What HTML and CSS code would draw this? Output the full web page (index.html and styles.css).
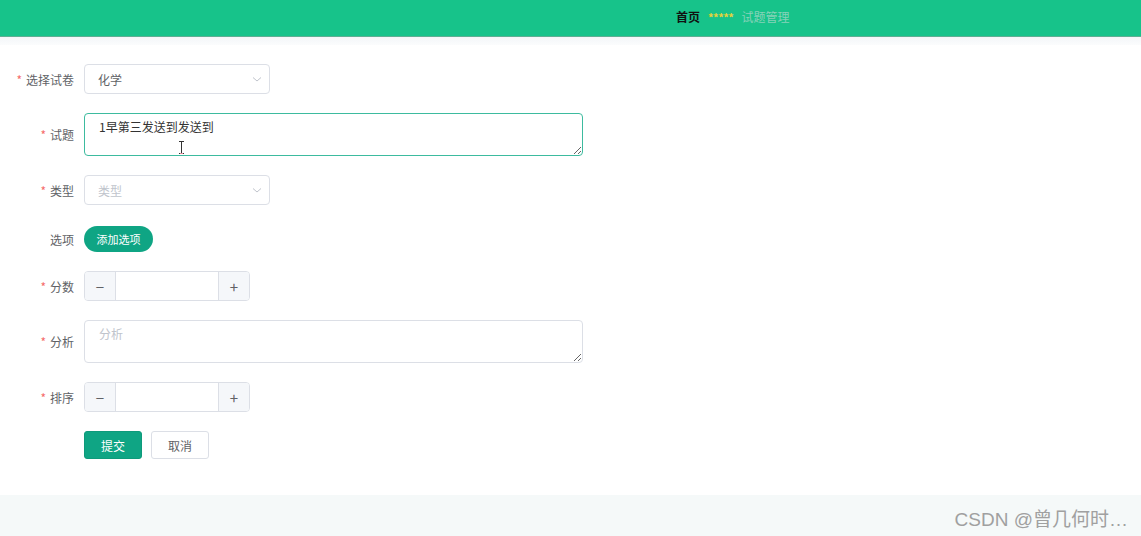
FILE: index.html
```html
<!DOCTYPE html>
<html lang="zh">
<head>
<meta charset="utf-8">
<title>试题管理</title>
<link rel="stylesheet" href="styles.css">
</head>
<body>
<header class="topbar">
  <nav class="crumbs">
    <span class="crumb-home">首页</span>
    <span class="crumb-sep">*****</span>
    <span class="crumb-cur">试题管理</span>
  </nav>
</header>
<div class="topshade"></div>
<main class="page">
  <form class="form">
    <div class="item">
      <label class="label req">选择试卷</label>
      <div class="select">
        <span class="select-text">化学</span>
        <svg class="chev" width="12" height="12" viewBox="0 0 12 12"><path d="M2 4.5 L6 8 L10 4.5" fill="none" stroke="#c0c4cc" stroke-width="1"/></svg>
      </div>
    </div>
    <div class="item">
      <label class="label req">试题</label>
      <div class="ta-wrap">
        <textarea class="ta focus">1早第三发送到发送到</textarea>
        <svg class="ibeam" width="7" height="13" viewBox="0 0 7 13"><path d="M1 0.5 H6 M3.5 0.5 V12.5 M1 12.5 H6" fill="none" stroke="#333" stroke-width="1"/><path d="M2 12.5 H5" stroke="#e08c9c" stroke-width="1"/></svg>
      </div>
    </div>
    <div class="item">
      <label class="label req">类型</label>
      <div class="select">
        <span class="select-text placeholder">类型</span>
        <svg class="chev" width="12" height="12" viewBox="0 0 12 12"><path d="M2 4.5 L6 8 L10 4.5" fill="none" stroke="#c0c4cc" stroke-width="1"/></svg>
      </div>
    </div>
    <div class="item item-opt">
      <label class="label">选项</label>
      <button type="button" class="btn-round">添加选项</button>
    </div>
    <div class="item">
      <label class="label req">分数</label>
      <div class="num">
        <span class="num-btn minus">−</span>
        <input class="num-input" type="text">
        <span class="num-btn plus">+</span>
      </div>
    </div>
    <div class="item">
      <label class="label req">分析</label>
      <textarea class="ta" placeholder="分析"></textarea>
    </div>
    <div class="item">
      <label class="label req">排序</label>
      <div class="num">
        <span class="num-btn minus">−</span>
        <input class="num-input" type="text">
        <span class="num-btn plus">+</span>
      </div>
    </div>
    <div class="item actions">
      <span class="label"></span>
      <button type="button" class="btn primary">提交</button>
      <button type="button" class="btn plain">取消</button>
    </div>
  </form>
</main>
<footer class="foot">
  <span class="mark">CSDN @曾几何时…</span>
</footer>
</body>
</html>
```
FILE: styles.css
```css
* { box-sizing: border-box; }
html, body { margin: 0; padding: 0; }
body {
  width: 1141px;
  height: 536px;
  overflow: hidden;
  font-family: "Noto Sans CJK SC", "Noto Sans", sans-serif;
  font-size: 12px;
  color: #606266;
  background: #ffffff;
}
.topbar {
  height: 37px;
  background: #17c38a;
  border-bottom: 1px solid #5fae93;
  display: flex;
  align-items: center;
  padding-left: 676px;
  padding-bottom: 2px;
}
.crumbs { display: flex; align-items: center; gap: 8px; font-size: 12px; line-height: 16px; }
.crumb-home { color: #111; font-weight: 700; }
.crumb-sep { color: #e6d33a; font-size: 11px; font-weight: 700; letter-spacing: -0.5px; }
.crumb-cur { color: #86d2b9; }
.topshade {
  height: 8px;
  background: linear-gradient(#f3f6f8, #fbfcfd);
}
.page {
  height: 450px;
  padding-top: 19px;
}
.form { display: flex; flex-direction: column; gap: 19px; }
.item { display: flex; align-items: center; }
.item-opt { margin-top: 2px; }
.label {
  width: 84px;
  padding-right: 10px;
  text-align: right;
  color: #606266;
  font-size: 12px;
  flex: none;
}
.label.req::before {
  content: "*";
  color: #f56c6c;
  margin-right: 4px;
}
.select {
  width: 186px;
  height: 30px;
  border: 1px solid #dcdfe6;
  border-radius: 4px;
  display: flex;
  align-items: center;
  justify-content: space-between;
  padding: 0 6px 0 13px;
  background: #fff;
}
.select-text { color: #606266; font-size: 12px; }
.select-text.placeholder { color: #c0c4cc; }
.ta-wrap { position: relative; height: 43px; }
.ta {
  display: block;
  width: 499px;
  height: 43px;
  border: 1px solid #dcdfe6;
  border-radius: 4px;
  padding: 4px 14px;
  font-family: "Noto Sans CJK SC", "Noto Sans", sans-serif;
  font-size: 12px;
  line-height: 18px;
  color: #333;
  resize: vertical;
  outline: none;
  background: #fff;
}
.ta.focus { border-color: #3dbb9f; caret-color: #222; }
.ta::placeholder { color: #c0c4cc; }
.ibeam { position: absolute; left: 94px; top: 28px; }
.btn-round {
  width: 69px;
  height: 26px;
  border: none;
  border-radius: 13px;
  background: #0fa584;
  color: #fff;
  font-family: inherit;
  font-size: 11px;
  padding: 0;
}
.num {
  width: 166px;
  height: 30px;
  display: flex;
  border: 1px solid #dcdfe6;
  border-radius: 4px;
  overflow: hidden;
}
.num-btn {
  width: 31px;
  background: #f5f7fa;
  color: #606266;
  display: flex;
  align-items: center;
  justify-content: center;
  font-size: 15px;
  flex: none;
}
.minus { border-right: 1px solid #dcdfe6; }
.plus { border-left: 1px solid #dcdfe6; }
.num-input { flex: 1; min-width: 0; border: none; outline: none; }
.btn {
  width: 58px;
  height: 28px;
  border-radius: 3px;
  font-family: inherit;
  font-size: 12px;
  padding: 0;
}
.btn.primary {
  background: #0fa584;
  border: 1px solid #0e9a7b;
  color: #fff;
}
.btn.plain {
  margin-left: 9px;
  background: #fff;
  border: 1px solid #dcdfe6;
  color: #606266;
}
.foot {
  height: 41px;
  background: #f5f9f9;
  display: flex;
  align-items: center;
  justify-content: flex-end;
  padding-right: 13px;
}
.mark {
  font-family: "Liberation Sans", "Noto Sans CJK SC", sans-serif;
  font-size: 19px;
  color: #a0a0a0;
  margin-top: 3px;
}
```
